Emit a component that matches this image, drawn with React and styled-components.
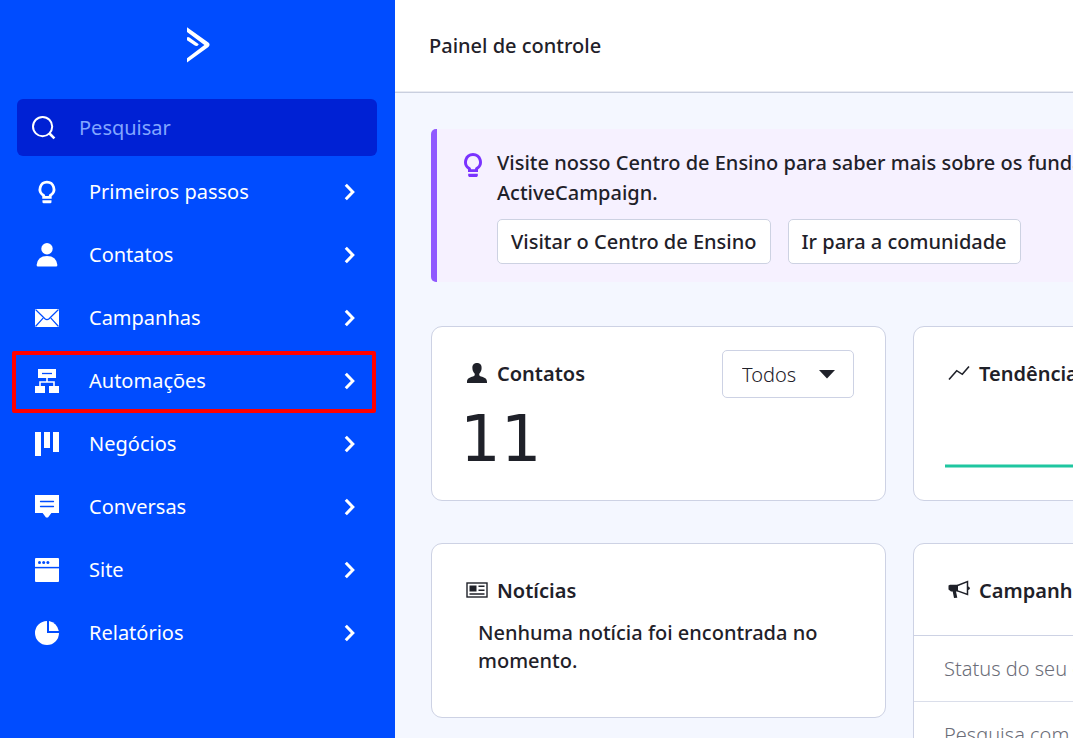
import React from "react";
import styled, { createGlobalStyle } from "styled-components";

const GlobalStyle = createGlobalStyle`
  * { box-sizing: border-box; }
  body {
    margin: 0;
    color: #1f2129;
    font-family: "Noto Sans", "Open Sans", sans-serif;
    font-size: 20px;
  }
  button, input, select { font: inherit; color: inherit; }
  h1, h2, p, ul { margin: 0; padding: 0; }
`;

const Shell = styled.div`
  display: flex;
  height: 100vh;
  overflow: hidden;
`;

const Sidebar = styled.aside`
  flex: none;
  width: 395px;
  padding: 27px 18px 0 17px;
  background: #004cff;
  color: #fff;
`;

const LogoLink = styled.a`
  display: flex;
  justify-content: center;
  height: 72px;
  padding-left: 4px;
  color: inherit;
`;

const SearchBox = styled.label`
  display: flex;
  align-items: center;
  gap: 23px;
  height: 57px;
  padding: 0 15px;
  border-radius: 6px;
  background: #0021d4;
`;

const SearchInput = styled.input`
  flex: 1;
  min-width: 0;
  padding: 0;
  border: 0;
  outline: 0;
  background: none;
  &::placeholder { color: #82a6ff; opacity: 1; }
`;

const NavList = styled.ul`
  padding-top: 4px;
  list-style: none;
`;

const NavItem = styled.li`
  position: relative;
`;

const NavLink = styled.a`
  display: flex;
  align-items: center;
  height: 63px;
  padding: 0 21px 0 18px;
  color: inherit;
  text-decoration: none;
`;

const NavLabel = styled.span`
  flex: 1;
  margin-left: 30px;
`;

const Highlight = styled.span`
  position: absolute;
  inset: 2px 1px -1px -5px;
  border: 4px solid #ff0000;
  border-radius: 2px;
  pointer-events: none;
`;

const Main = styled.main`
  flex: 1;
  min-width: 0;
  overflow: hidden;
  background: #f4f7ff;
`;

const TopBar = styled.header`
  display: flex;
  align-items: center;
  height: 93px;
  padding: 0 34px 2px;
  background: #fff;
  border-bottom: 1px solid #c9cfdf;
  box-shadow: inset 0 -1px #e9ebf2;
`;

const PageTitle = styled.h1`
  font-size: 20px;
  font-weight: 550;
`;

const Content = styled.div`
  min-width: 1009px;
  padding: 36px;
`;

const Banner = styled.section`
  display: flex;
  gap: 15px;
  margin-bottom: 44px;
  padding: 19px 27px 18px;
  border-left: 6px solid #9059ff;
  border-radius: 5px;
  background: #f6f1ff;
  font-weight: 470;
  line-height: 30px;
  & > svg { margin-top: 5px; color: #7a33ff; }
`;

const BannerActions = styled.div`
  display: flex;
  gap: 17px;
  margin-top: 11px;
`;

const Button = styled.button`
  height: 45px;
  padding: 0 13px;
  border: 1px solid #cdd2e2;
  border-radius: 5px;
  background: #fff;
`;

const Cards = styled.div`
  display: grid;
  grid-template-columns: repeat(2, minmax(455px, 1fr));
  gap: 42px 27px;
  align-items: start;
`;

const Card = styled.section`
  min-height: 175px;
  border: 1px solid #cdd2e4;
  border-radius: 11px;
  background: #fff;
`;

const CardHead = styled.div`
  display: flex;
  align-items: flex-start;
  justify-content: space-between;
  padding: 23px 31px 0 34px;
  ${(p) => p.$ruled && "padding-bottom: 22px; border-bottom: 1px solid #cdd2e4;"}
`;

const CardTitle = styled.h2`
  display: flex;
  align-items: center;
  gap: 9px;
  height: 46px;
  font-size: 20px;
  font-weight: 600;
`;

const SelectWrap = styled.div`
  position: relative;
  & > svg {
    position: absolute;
    top: 20px;
    right: 19px;
    pointer-events: none;
  }
`;

const Select = styled.select`
  display: block;
  width: 132px;
  height: 48px;
  padding: 0 19px;
  border: 1px solid #cdd2e4;
  border-radius: 5px;
  background: #fff;
  font-weight: 350;
  appearance: none;
`;

const Figure = styled.p`
  padding-left: 28px;
  font-family: "DejaVu Sans", sans-serif;
  font-size: 64px;
  line-height: 82px;
`;

const News = styled.p`
  padding: 6px 46px 0;
  font-weight: 500;
  line-height: 28px;
`;

const TrendChart = styled.svg`
  display: block;
  width: calc(100% - 62px);
  height: 4px;
  margin: 68px 31px 0;
`;

const Row = styled.p`
  height: 66px;
  padding: 0 30px;
  border-bottom: 1px solid #dadeea;
  color: #6b6d78;
  font-weight: 350;
  line-height: 65px;
`;

const Icon = styled.svg.attrs((p) => ({
  width: p.$w || 24,
  height: p.$h || 24,
  viewBox: `0 0 ${p.$w || 24} ${p.$h || 24}`,
  "aria-hidden": true,
}))`
  flex: none;
  fill: currentColor;
`;

const Logo = () => (
  <Icon $w={24} $h={36}>
    <path d="M0 .3 21.4 15.6Q23.8 17.8 21.4 20L0 35.6V31.2L17.4 18 0 5Z" />
    <path d="M0 10.4Q1 9.600 2.400 10.600L11.800 17.200Q10 20 7.800 18.600L0 13.200Z" />
  </Icon>
);

const SearchIcon = () => (
  <Icon>
    <g fill="none" stroke="currentColor">
      <circle cx="10.6" cy="10.6" r="9.6" strokeWidth="2" />
      <path d="m17 17 5.4 5.4" strokeWidth="2.6" />
    </g>
  </Icon>
);

const BulbShape = () => (
  <>
    <path fillRule="evenodd" d="M9 0a9 9 0 0 1 5 16.4V19H4v-2.6A9 9 0 0 1 9 0Zm0 3a6 6 0 0 0-2.600 11.400l.8 1.900h3.600l.8-1.900A6 6 0 0 0 9 3Z" />
    <path d="M4.200 20.800h9.600V23l-1 1H5.200l-1-1Z" />
  </>
);

const BulbIcon = () => (
  <Icon>
    <g transform="translate(3.500 .8) scale(.94)"><BulbShape /></g>
  </Icon>
);

const PersonIcon = () => (
  <Icon>
    <circle cx="12" cy="5.7" r="5.7" />
    <path d="M1.6 22Q2.600 13 12 13T22.400 22Q22.400 23.500 21 23.500H3Q1.600 23.500 1.600 22Z" />
  </Icon>
);

const MailIcon = () => (
  <Icon>
    <rect y="3" width="24" height="18" />
    <path d="m.5 3.5 9.4 9.2q2.1 1.9 4.2 0l9.4-9.2M.5 20.5l7.6-8.4M23.5 20.5l-7.6-8.4" fill="none" stroke="#004cff" strokeWidth="1.2" />
  </Icon>
);

const FlowIcon = () => (
  <Icon>
    <path d="M3 0h18v9H3zM0 17h10v7H0zM14 17h10v7H14z" />
    <path d="M12 9v4M5 17v-4h14v4" fill="none" stroke="currentColor" strokeWidth="1.6" />
    <path d="M7 4.5h10" stroke="#004cff" strokeWidth="1.3" />
  </Icon>
);

const BoardIcon = () => (
  <Icon><path d="M0 0h6v24H0zM9 0h6v16H9zM18 0h6v20h-6z" /></Icon>
);

const ChatIcon = () => (
  <Icon>
    <path d="M0 0h24v18h-7.6L13 22.5h-2L7.6 18H0z" />
    <path d="M5.5 6.5h13M5.5 11.5h13" stroke="#004cff" strokeWidth="1.3" strokeLinecap="round" />
  </Icon>
);

const BrowserIcon = () => (
  <Icon>
    <rect width="24" height="24" rx="1" />
    <path d="M0 9.600h24" stroke="#004cff" strokeWidth="1.500" />
    <g fill="#004cff"><circle cx="4.5" cy="4.5" r="1.5" /><circle cx="8.7" cy="4.5" r="1.5" /><circle cx="12.9" cy="4.5" r="1.5" /></g>
  </Icon>
);

const PieIcon = () => (
  <Icon>
    <path d="M12 0A12 12 0 1 0 24 12H12Z" />
    <path d="M14 .1A12 12 0 0 1 23.8 10H14Z" />
  </Icon>
);

const Chevron = () => (
  <Icon $w={12} $h={18}>
    <path d="m1.8 1.8 7 7.2-7 7.2" fill="none" stroke="currentColor" strokeWidth="3" />
  </Icon>
);

const BustIcon = () => (
  <Icon $w={22} $h={22}>
    <path d="M11 1c3.300 0 4.800 2.200 4.600 5.200-.1 2.500-1 3.900-2.200 5.300-.5 1.600 0 2.500 1.600 3.100 3.200 1 6 1.700 6 5.400v1H1v-1c0-3.700 2.800-4.400 6-5.400 1.600-.6 2.100-1.500 1.600-3.100C7.400 10.100 6.500 8.700 6.400 6.200 6.200 3.200 7.700 1 11 1Z" />
  </Icon>
);

const TrendIcon = () => (
  <Icon $w={22} $h={22}>
    <path d="m1 17.500 7.700-8.800 5.600 3.600L21 4.500" fill="none" stroke="currentColor" strokeWidth="1.600" />
  </Icon>
);

const NewsIcon = () => (
  <Icon $w={22} $h={22}>
    <rect x="1" y="4" width="20" height="14" fill="none" stroke="currentColor" strokeWidth="1.400" />
    <path d="M3.500 6.500h7v6h-7zM12.500 6.500h6V8h-6zM12.500 10.500h6V12h-6zM3.500 14.300h15v1.500h-15z" />
  </Icon>
);

const HornIcon = () => (
  <Icon $w={22} $h={22}>
    <path d="M.5 6.500 2 5.800h8v6.700H8l1.300 6.200-3.300.4L4.700 12.500H3L.5 10.500Z" />
    <path d="M9.500 6.500 19.500 2.500v13l-10-3.600" fill="none" stroke="currentColor" strokeWidth="1.500" />
    <path d="M20 7.500q1.800 0 1.800 1.700T20 10.900Z" />
  </Icon>
);

const NAV = [
  ["Primeiros passos", BulbIcon],
  ["Contatos", PersonIcon],
  ["Campanhas", MailIcon],
  ["Automações", FlowIcon, true],
  ["Negócios", BoardIcon],
  ["Conversas", ChatIcon],
  ["Site", BrowserIcon],
  ["Relatórios", PieIcon],
];

export default function App() {
  return (
    <>
      <GlobalStyle />
      <Shell>
        <Sidebar>
          <LogoLink href="#" aria-label="ActiveCampaign"><Logo /></LogoLink>
          <SearchBox>
            <SearchIcon />
            <SearchInput type="text" placeholder="Pesquisar" aria-label="Pesquisar" />
          </SearchBox>
          <nav>
            <NavList>
              {NAV.map(([label, Glyph, marked]) => (
                <NavItem key={label}>
                  <NavLink href="#">
                    <Glyph />
                    <NavLabel>{label}</NavLabel>
                    <Chevron />
                  </NavLink>
                  {marked && <Highlight />}
                </NavItem>
              ))}
            </NavList>
          </nav>
        </Sidebar>
        <Main>
          <TopBar><PageTitle>Painel de controle</PageTitle></TopBar>
          <Content>
            <Banner>
              <Icon $w={18} $h={24}><BulbShape /></Icon>
              <div>
                <p>
                  Visite nosso Centro de Ensino para saber mais sobre os fundamentos do
                  <br />
                  ActiveCampaign.
                </p>
                <BannerActions>
                  <Button type="button">Visitar o Centro de Ensino</Button>
                  <Button type="button">Ir para a comunidade</Button>
                </BannerActions>
              </div>
            </Banner>
            <Cards>
              <Card>
                <CardHead>
                  <CardTitle><BustIcon />Contatos</CardTitle>
                  <SelectWrap>
                    <Select aria-label="Contatos" defaultValue="Todos">
                      <option>Todos</option>
                    </Select>
                    <Icon $w={16} $h={9}><path d="M0 0h16L8 8.500Z" /></Icon>
                  </SelectWrap>
                </CardHead>
                <Figure>11</Figure>
              </Card>
              <Card>
                <CardHead><CardTitle><TrendIcon />Tendência de contatos</CardTitle></CardHead>
                <TrendChart preserveAspectRatio="none" viewBox="0 0 100 4" aria-hidden="true">
                  <path d="M0 2h100" stroke="#1fc6a0" strokeWidth="3" />
                </TrendChart>
              </Card>
              <Card>
                <CardHead><CardTitle><NewsIcon />Notícias</CardTitle></CardHead>
                <News>Nenhuma notícia foi encontrada no momento.</News>
              </Card>
              <Card>
                <CardHead $ruled><CardTitle><HornIcon />Campanhas</CardTitle></CardHead>
                <Row>Status do seu envio</Row>
                <Row>Pesquisa com clientes</Row>
              </Card>
            </Cards>
          </Content>
        </Main>
      </Shell>
    </>
  );
}
